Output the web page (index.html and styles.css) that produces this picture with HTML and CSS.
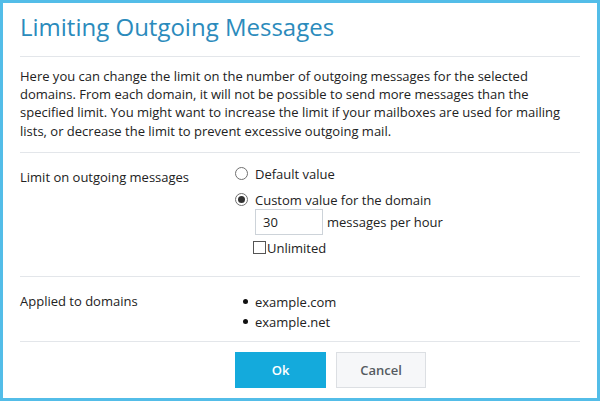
FILE: index.html
```html
<!DOCTYPE html>
<html lang="en">
<head>
<meta charset="utf-8">
<title>Limiting Outgoing Messages</title>
<link rel="stylesheet" href="styles.css">
</head>
<body>
<div class="dialog">
  <div class="header">
    <h1 class="title">Limiting Outgoing Messages</h1>
  </div>
  <p class="desc">Here you can change the limit on the number of outgoing messages for the selected domains. From each domain, it will not be possible to send more messages than the specified limit. You might want to increase the limit if your mailboxes are used for mailing lists, or decrease the limit to prevent excessive outgoing mail.</p>
  <div class="row row-limit">
    <div class="label label-limit">Limit on outgoing messages</div>
    <div class="field">
      <label class="option"><input type="radio" name="lim" class="radio"><span>Default value</span></label>
      <label class="option option-custom"><input type="radio" name="lim" class="radio" checked><span>Custom value for the domain</span></label>
      <div class="custom">
        <div class="value-line"><input type="text" class="num" value="30"><span>messages per hour</span></div>
        <label class="check-line"><input type="checkbox" class="check"><span>Unlimited</span></label>
      </div>
    </div>
  </div>
  <div class="row row-domains">
    <div class="label label-domains">Applied to domains</div>
    <ul class="domains">
      <li>example.com</li>
      <li>example.net</li>
    </ul>
  </div>
  <div class="buttons">
    <button class="btn btn-ok">Ok</button>
    <button class="btn btn-cancel">Cancel</button>
  </div>
</div>
</body>
</html>
```
FILE: styles.css
```css
html, body {
  margin: 0;
  padding: 0;
  background: #ffffff;
}
body {
  font-family: "Open Sans", "Noto Sans", sans-serif;
  font-size: 13px;
  color: #222222;
}
.dialog {
  box-sizing: border-box;
  width: 600px;
  height: 401px;
  border: 3px solid #53bde8;
  padding: 0 17px;
  display: flex;
  flex-direction: column;
}
.header {
  border-bottom: 1px solid #e3e6ea;
  height: 53px;
  flex: none;
  display: flex;
  align-items: flex-start;
}
.title {
  margin: 0;
  padding-top: 8px;
  font-size: 24px;
  font-weight: 400;
  line-height: 32px;
  color: #2b8bbc;
}
.desc {
  margin: 0;
  padding: 10px 0 12px;
  line-height: 18.2px;
  border-bottom: 1px solid #e3e6ea;
}
.row {
  display: grid;
  grid-template-columns: 215px 1fr;
  border-bottom: 1px solid #e3e6ea;
}
.row-limit {
  padding: 12px 0 19px;
}
.label {
  line-height: 18px;
}
.label-limit {
  padding-top: 3px;
}
.field {
  display: flex;
  flex-direction: column;
}
.option {
  display: flex;
  align-items: center;
  line-height: 18px;
  gap: 7px;
}
.option-custom {
  margin-top: 8px;
}
.radio {
  appearance: none;
  -webkit-appearance: none;
  margin: 0;
  width: 13px;
  height: 13px;
  border: 1px solid #707070;
  border-radius: 50%;
  box-sizing: border-box;
  background: #fff;
  display: grid;
  place-items: center;
}
.radio:checked::after {
  content: "";
  width: 7px;
  height: 7px;
  border-radius: 50%;
  background: #333;
}
.custom {
  padding-left: 20px;
  display: flex;
  flex-direction: column;
}
.value-line {
  display: flex;
  align-items: center;
  gap: 4px;
}
.num {
  box-sizing: border-box;
  width: 68px;
  height: 26px;
  margin: 0;
  border: 1px solid #cdd3d9;
  padding: 0 7px;
  font-family: inherit;
  font-size: 13px;
  color: #222;
  outline: none;
}
.check-line {
  display: flex;
  align-items: center;
  line-height: 18px;
  margin-top: 4px;
  margin-left: -2px;
}
.check {
  appearance: none;
  -webkit-appearance: none;
  margin: 0 1px 0 0;
  width: 13px;
  height: 13px;
  border: 1px solid #555;
  box-sizing: border-box;
  background: #fff;
}
.row-domains {
  padding: 15px 0 9px;
}
.label-domains {
  line-height: 18px;
}
.domains {
  list-style: none;
  margin: 0;
  padding: 0 0 0 8px;
}
.domains li {
  line-height: 20px;
  display: flex;
  align-items: center;
}
.domains li::before {
  content: "";
  width: 5px;
  height: 5px;
  border-radius: 50%;
  background: #111;
  margin-right: 7px;
}
.buttons {
  display: flex;
  gap: 10px;
  padding: 10px 0 0 215px;
}
.btn {
  box-sizing: border-box;
  height: 36px;
  margin: 0;
  font-family: inherit;
  font-size: 13px;
  font-weight: 600;
  cursor: pointer;
}
.btn-ok {
  width: 91px;
  border: none;
  background: #14aadc;
  color: #ffffff;
}
.btn-cancel {
  width: 90px;
  border: 1px solid #dcdfe3;
  background: #f6f7f9;
  color: #555b61;
}
```
